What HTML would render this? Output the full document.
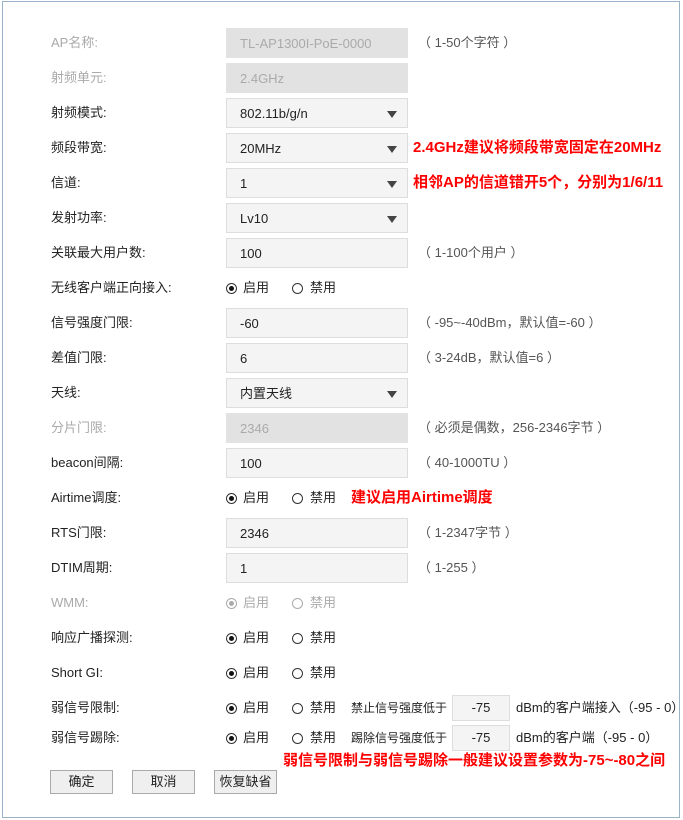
<!DOCTYPE html>
<html><head><meta charset="utf-8"><style>
body{margin:0;width:683px;height:820px;background:#fff;position:relative;overflow:hidden;font-family:"Liberation Sans","Noto Sans CJK SC",sans-serif;font-size:13px;color:#222}
.frame{position:absolute;left:2px;top:1px;width:676px;height:815px;border:1px solid #9ab3c8}
.a{position:absolute;white-space:nowrap;line-height:16px;height:16px}
.lbl{left:51px}
.g{color:#aaa}
.inp{position:absolute;left:226px;width:182px;height:30px;box-sizing:border-box;border:1px solid #ddd;background:#f4f4f4;padding-left:13px;padding-top:1px;display:flex;align-items:center;line-height:16px}
.dis{background:#e2e2e2;color:#aaa;border-color:#e2e2e2}
.arr{position:absolute;right:10px;top:12px;width:0;height:0;border-left:5px solid transparent;border-right:5px solid transparent;border-top:7px solid #444}
.help{left:418px;color:#555}
.red{color:#f00;font-weight:bold;font-size:15px;line-height:18px;height:18px}
.r{position:absolute;width:11px;height:11px;border:1px solid #333;border-radius:50%;box-sizing:border-box}
.r.on::after{content:"";position:absolute;left:2px;top:2px;width:5px;height:5px;border-radius:50%;background:#111}
.gr .r{border-color:#aaa}.gr .r.on::after{background:#aaa}.gr span{color:#aaa}
.sm{position:absolute;left:452px;width:58px;height:26px;box-sizing:border-box;border:1px solid #ddd;background:#f4f4f4;display:flex;align-items:center;justify-content:center;line-height:16px}
.btn{position:absolute;top:770px;width:63px;height:24px;box-sizing:border-box;border:1px solid #aaa;background:#efefef;display:flex;align-items:center;justify-content:center;line-height:16px}
.s12{font-size:12px}
</style></head><body>
<div class="frame"></div>

<div class="a lbl g" style="top:35px">AP名称:</div>
<div class="inp dis" style="top:28px">TL-AP1300I-PoE-0000</div>
<div class="a help g" style="top:35px">（ 1-50个字符 ）</div>

<div class="a lbl g" style="top:70px">射频单元:</div>
<div class="inp dis" style="top:63px">2.4GHz</div>

<div class="a lbl" style="top:105px">射频模式:</div>
<div class="inp" style="top:98px">802.11b/g/n<div class="arr"></div></div>

<div class="a lbl" style="top:140px">频段带宽:</div>
<div class="inp" style="top:133px">20MHz<div class="arr"></div></div>
<div class="a red" style="left:413px;top:139px">2.4GHz建议将频段带宽固定在20MHz</div>

<div class="a lbl" style="top:175px">信道:</div>
<div class="inp" style="top:168px">1<div class="arr"></div></div>
<div class="a red" style="left:413px;top:174px">相邻AP的信道错开5个，分别为1/6/11</div>

<div class="a lbl" style="top:210px">发射功率:</div>
<div class="inp" style="top:203px">Lv10<div class="arr"></div></div>

<div class="a lbl" style="top:245px">关联最大用户数:</div>
<div class="inp" style="top:238px">100</div>
<div class="a help" style="top:245px">（ 1-100个用户 ）</div>

<div class="a lbl" style="top:280px">无线客户端正向接入:</div>
<div class="r on" style="left:226px;top:283px"></div><span class="a" style="left:243px;top:280px">启用</span>
<div class="r" style="left:292px;top:283px"></div><span class="a" style="left:310px;top:280px">禁用</span>

<div class="a lbl" style="top:315px">信号强度门限:</div>
<div class="inp" style="top:308px">-60</div>
<div class="a help" style="top:315px">（ -95~-40dBm，默认值=-60 ）</div>

<div class="a lbl" style="top:350px">差值门限:</div>
<div class="inp" style="top:343px">6</div>
<div class="a help" style="top:350px">（ 3-24dB，默认值=6 ）</div>

<div class="a lbl" style="top:385px">天线:</div>
<div class="inp" style="top:378px">内置天线<div class="arr"></div></div>

<div class="a lbl g" style="top:420px">分片门限:</div>
<div class="inp dis" style="top:413px">2346</div>
<div class="a help g" style="top:420px">（ 必须是偶数，256-2346字节 ）</div>

<div class="a lbl" style="top:455px">beacon间隔:</div>
<div class="inp" style="top:448px">100</div>
<div class="a help" style="top:455px">（ 40-1000TU ）</div>

<div class="a lbl" style="top:490px">Airtime调度:</div>
<div class="r on" style="left:226px;top:493px"></div><span class="a" style="left:243px;top:490px">启用</span>
<div class="r" style="left:292px;top:493px"></div><span class="a" style="left:310px;top:490px">禁用</span>
<div class="a red" style="left:351px;top:489px">建议启用Airtime调度</div>

<div class="a lbl" style="top:525px">RTS门限:</div>
<div class="inp" style="top:518px">2346</div>
<div class="a help" style="top:525px">（ 1-2347字节 ）</div>

<div class="a lbl" style="top:560px">DTIM周期:</div>
<div class="inp" style="top:553px">1</div>
<div class="a help" style="top:560px">（ 1-255 ）</div>

<div class="gr">
<div class="a lbl g" style="top:595px">WMM:</div>
<div class="r on" style="left:226px;top:598px"></div><span class="a" style="left:243px;top:595px">启用</span>
<div class="r" style="left:292px;top:598px"></div><span class="a" style="left:310px;top:595px">禁用</span>
</div>

<div class="a lbl" style="top:630px">响应广播探测:</div>
<div class="r on" style="left:226px;top:633px"></div><span class="a" style="left:243px;top:630px">启用</span>
<div class="r" style="left:292px;top:633px"></div><span class="a" style="left:310px;top:630px">禁用</span>

<div class="a lbl" style="top:665px">Short GI:</div>
<div class="r on" style="left:226px;top:668px"></div><span class="a" style="left:243px;top:665px">启用</span>
<div class="r" style="left:292px;top:668px"></div><span class="a" style="left:310px;top:665px">禁用</span>

<div class="a lbl" style="top:700px">弱信号限制:</div>
<div class="r on" style="left:226px;top:703px"></div><span class="a" style="left:243px;top:700px">启用</span>
<div class="r" style="left:292px;top:703px"></div><span class="a" style="left:310px;top:700px">禁用</span>
<span class="a s12" style="left:351px;top:700px">禁止信号强度低于</span>
<div class="sm" style="top:695px">-75</div>
<span class="a" style="left:516px;top:700px">dBm的客户端接入（-95 - 0）</span>

<div class="a lbl" style="top:730px">弱信号踢除:</div>
<div class="r on" style="left:226px;top:733px"></div><span class="a" style="left:243px;top:730px">启用</span>
<div class="r" style="left:292px;top:733px"></div><span class="a" style="left:310px;top:730px">禁用</span>
<span class="a s12" style="left:351px;top:730px">踢除信号强度低于</span>
<div class="sm" style="top:725px">-75</div>
<span class="a" style="left:516px;top:730px">dBm的客户端（-95 - 0）</span>

<div class="a red" style="left:283px;top:752px">弱信号限制与弱信号踢除一般建议设置参数为-75~-80之间</div>

<div class="btn" style="left:50px">确定</div>
<div class="btn" style="left:132px">取消</div>
<div class="btn" style="left:214px">恢复缺省</div>
</body></html>
